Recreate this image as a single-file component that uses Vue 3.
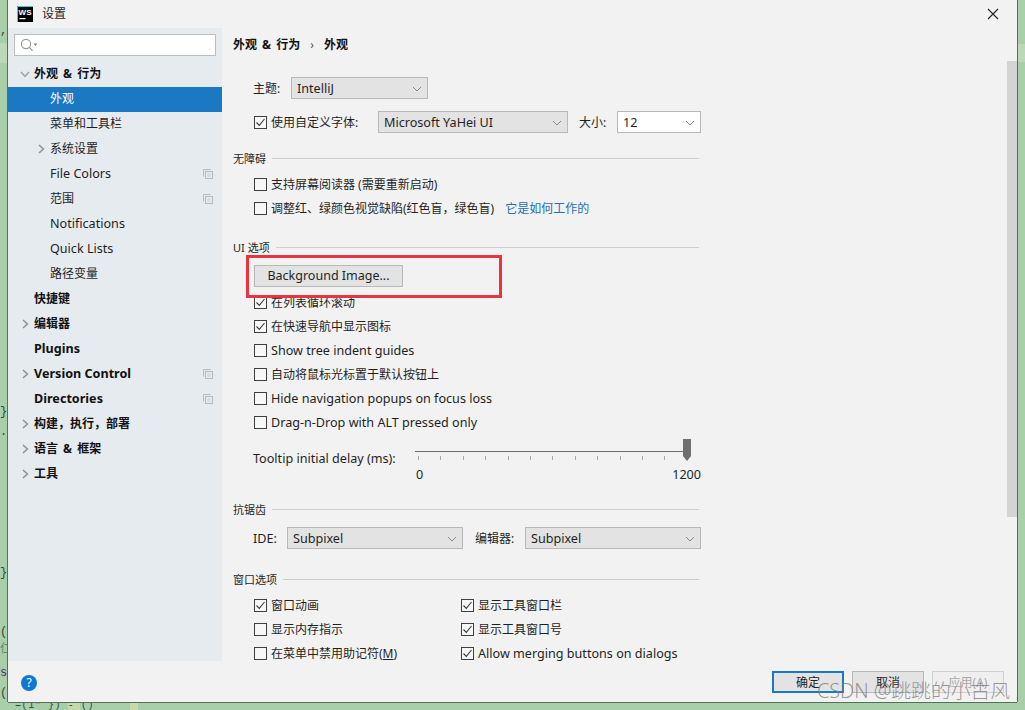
<script setup>
const isZh = (s) => /[\u4e00-\u9fff]/.test(s)
const tree = [
  { t: '外观 & 行为', bold: true, arrow: 'down', lv: 0 },
  { t: '外观', lv: 1, active: true },
  { t: '菜单和工具栏', lv: 1 },
  { t: '系统设置', lv: 1, arrow: 'right' },
  { t: 'File Colors', lv: 1, copy: true },
  { t: '范围', lv: 1, copy: true },
  { t: 'Notifications', lv: 1 },
  { t: 'Quick Lists', lv: 1 },
  { t: '路径变量', lv: 1 },
  { t: '快捷键', bold: true, lv: 0 },
  { t: '编辑器', bold: true, lv: 0, arrow: 'right' },
  { t: 'Plugins', bold: true, lv: 0 },
  { t: 'Version Control', bold: true, lv: 0, arrow: 'right', copy: true },
  { t: 'Directories', bold: true, lv: 0, copy: true },
  { t: '构建，执行，部署', bold: true, lv: 0, arrow: 'right' },
  { t: '语言 & 框架', bold: true, lv: 0, arrow: 'right' },
  { t: '工具', bold: true, lv: 0, arrow: 'right' },
]
const ui = [
  { t: '在列表循环滚动', c: true },
  { t: '在快速导航中显示图标', c: true },
  { t: 'Show tree indent guides', c: false },
  { t: '自动将鼠标光标置于默认按钮上', c: false },
  { t: 'Hide navigation popups on focus loss', c: false },
  { t: 'Drag-n-Drop with ALT pressed only', c: false },
]
const winLeft = [
  { t: '窗口动画', c: true },
  { t: '显示内存指示', c: false },
]
const winRight = [
  { t: '显示工具窗口栏', c: true },
  { t: '显示工具窗口号', c: true },
  { t: 'Allow merging buttons on dialogs', c: true },
]
const ticks = Array.from({ length: 13 }, (_, i) => i)
const frags = [
  { t: ',', top: 24, c: '#2d4a35' },
  { t: '}', top: 405, c: '#2d4a35' },
  { t: '.', top: 425, c: '#2d4a35' },
  { t: '}', top: 566, c: '#2d4a35' },
  { t: '(', top: 625, c: '#2d4a35' },
  { t: '仁', top: 643, c: '#5a8a72' },
  { t: 'so', top: 666, c: '#4b2a78' },
  { t: '(', top: 686, c: '#2d4a35' },
]
</script>

<template>
  <div class="desk">
    <span v-for="f in frags" :key="f.top" class="frag" :style="{ top: f.top + 'px', color: f.c }">{{ f.t }}</span>
    <span class="stripfrag">=(1"     }) -   ()</span>

    <div class="dialog">
      <header class="titlebar">
        <svg class="logo" width="16" height="16" viewBox="0 0 16 16">
          <rect width="16" height="16" fill="#000" />
          <path d="M0.5 16 V0.5 H16" fill="none" stroke="#21d7e8" />
          <rect x="2.5" y="12" width="6" height="1.2" fill="#fff" />
          <text x="1.6" y="9" class="logotext">WS</text>
        </svg>
        <span class="title">设置</span>
        <svg class="close" width="12" height="12" viewBox="0 0 12 12">
          <path d="M1 1 L11 11 M11 1 L1 11" stroke="#222" stroke-width="1.1" fill="none" />
        </svg>
      </header>

      <div class="body">
        <aside class="side">
          <div class="search">
            <svg width="18" height="14" viewBox="0 0 18 14">
              <circle cx="6" cy="6" r="4.6" fill="none" stroke="#9a9a9a" stroke-width="1.1" />
              <path d="M9.4 9.4 L12.5 12.6" stroke="#9a9a9a" stroke-width="1.3" />
              <path d="M13.5 5.5 h4 l-2 2.4z" fill="#8a8a8a" />
            </svg>
          </div>
          <div class="tree">
            <div
              v-for="n in tree"
              :key="n.t"
              class="node"
              :class="{ active: n.active, bold: n.bold, l1: n.lv === 1, zh: isZh(n.t) }"
            >
              <svg v-if="n.arrow === 'down'" class="arrow" width="10" height="10" viewBox="0 0 10 10">
                <path d="M1 3 L5 7.4 L9 3" fill="none" stroke="#a3a7ab" stroke-width="1.6" />
              </svg>
              <svg v-if="n.arrow === 'right'" class="arrow" width="10" height="10" viewBox="0 0 10 10">
                <path d="M3 1 L7.4 5 L3 9" fill="none" stroke="#8f9396" stroke-width="1.6" />
              </svg>
              <span>{{ n.t }}</span>
              <svg v-if="n.copy" class="copy" width="10" height="10" viewBox="0 0 10 10">
                <path d="M0.5 7.5 V0.5 H7.5" fill="none" stroke="#b6babd" />
                <rect x="2.5" y="2.5" width="7" height="7" fill="none" stroke="#b6babd" />
                <path d="M4 5 H8 M4 7 H8" stroke="#ccd0d3" />
              </svg>
            </div>
          </div>
        </aside>

        <main class="content">
          <div class="crumb"><b>外观 &amp; 行为</b><i>›</i><b>外观</b></div>

          <div class="row theme">
            <label class="lab">主题:</label>
            <div class="field gray w137">IntelliJ<svg class="chev" width="10" height="6" viewBox="0 0 10 6"><path d="M1 1 L5 5 L9 1" fill="none" stroke="#8a8a8a" /></svg></div>
          </div>

          <div class="row font">
            <span class="box"><svg width="13" height="13" viewBox="0 0 13 13"><path d="M2.5 6.5 L5.3 9.4 L10.5 3" fill="none" stroke="#3c3c3c" stroke-width="1.1" /></svg></span>
            <span class="cklab zh fontlab">使用自定义字体:</span>
            <div class="field gray w190">Microsoft YaHei UI<svg class="chev" width="10" height="6" viewBox="0 0 10 6"><path d="M1 1 L5 5 L9 1" fill="none" stroke="#8a8a8a" /></svg></div>
            <span class="sizelab">大小:</span>
            <div class="field white w84">12<svg class="chev" width="10" height="6" viewBox="0 0 10 6"><path d="M1 1 L5 5 L9 1" fill="none" stroke="#8a8a8a" /></svg></div>
          </div>

          <div class="group g-a11y"><span>无障碍</span><hr /></div>
          <div class="ck"><span class="box"></span><span class="cklab zh">支持屏幕阅读器 (需要重新启动)</span></div>
          <div class="ck">
            <span class="box"></span><span class="cklab zh">调整红、绿颜色视觉缺陷(红色盲，绿色盲)</span>
            <a class="link">它是如何工作的</a>
          </div>

          <div class="group g-ui"><span>UI 选项</span><hr /></div>
          <div class="bgwrap">
            <button class="btn bg">Background Image...</button>
            <div class="redbox"></div>
          </div>
          <div v-for="o in ui" :key="o.t" class="ck">
            <span class="box"><svg v-if="o.c" width="13" height="13" viewBox="0 0 13 13"><path d="M2.5 6.5 L5.3 9.4 L10.5 3" fill="none" stroke="#3c3c3c" stroke-width="1.1" /></svg></span>
            <span class="cklab" :class="{ zh: isZh(o.t) }">{{ o.t }}</span>
          </div>

          <div class="tip">
            <span class="tiplab">Tooltip initial delay (ms):</span>
            <div class="slider">
              <div class="track"></div>
              <div class="ticks"><i v-for="k in ticks" :key="k"></i></div>
              <svg class="thumb" width="8" height="22" viewBox="0 0 8 22"><path d="M0 0 H8 V17 L4 22 L0 17 Z" fill="#6e6e6e" /></svg>
              <div class="scale"><span>0</span><span>1200</span></div>
            </div>
          </div>

          <div class="group g-aa"><span>抗锯齿</span><hr /></div>
          <div class="row aa">
            <label class="idelab">IDE:</label>
            <div class="field gray w176">Subpixel<svg class="chev" width="10" height="6" viewBox="0 0 10 6"><path d="M1 1 L5 5 L9 1" fill="none" stroke="#8a8a8a" /></svg></div>
            <label class="edlab">编辑器:</label>
            <div class="field gray w176">Subpixel<svg class="chev" width="10" height="6" viewBox="0 0 10 6"><path d="M1 1 L5 5 L9 1" fill="none" stroke="#8a8a8a" /></svg></div>
          </div>

          <div class="group g-win"><span>窗口选项</span><hr /></div>
          <div class="cols">
            <div class="col">
              <div v-for="o in winLeft" :key="o.t" class="ck">
                <span class="box"><svg v-if="o.c" width="13" height="13" viewBox="0 0 13 13"><path d="M2.5 6.5 L5.3 9.4 L10.5 3" fill="none" stroke="#3c3c3c" stroke-width="1.1" /></svg></span>
                <span class="cklab zh">{{ o.t }}</span>
              </div>
              <div class="ck"><span class="box"></span><span class="cklab zh">在菜单中禁用助记符(<u>M</u>)</span></div>
            </div>
            <div class="col">
              <div v-for="o in winRight" :key="o.t" class="ck">
                <span class="box"><svg v-if="o.c" width="13" height="13" viewBox="0 0 13 13"><path d="M2.5 6.5 L5.3 9.4 L10.5 3" fill="none" stroke="#3c3c3c" stroke-width="1.1" /></svg></span>
                <span class="cklab" :class="{ zh: isZh(o.t) }">{{ o.t }}</span>
              </div>
            </div>
          </div>
        </main>

        <div class="sbthumb"></div>
      </div>

      <footer class="foot">
        <div class="help">?</div>
        <div class="actions">
          <button class="btn ok">确定</button>
          <button class="btn">取消</button>
          <button class="btn dis">应用(A)</button>
        </div>
      </footer>
      <div class="wm">CSDN @跳跳的小古风</div>
    </div>
  </div>
</template>

<style>
html, body { margin: 0; padding: 0; overflow: hidden; }
</style>

<style scoped>
.desk {
  position: relative;
  width: 1025px;
  height: 710px;
  background:
    linear-gradient(#c5d9ad, #c5d9ad) 68px 703px / 12px 7px no-repeat,
    linear-gradient(#c5d9ad, #c5d9ad) 130px 703px / 8px 7px no-repeat,
    linear-gradient(#bcd8b8, #bcd8b8) 0 43px / 8px 20px no-repeat,
    linear-gradient(#bcd8b8, #bcd8b8) 1018px 44px / 7px 18px no-repeat,
    #a9cfaa;
  padding-left: 8px;
  box-sizing: border-box;
  overflow: hidden;
  font-family: "Noto Sans", "Noto Sans CJK SC", sans-serif;
  font-size: 12.6px;
  color: #1f1f1f;
}
.frag { position: absolute; left: 0; font-size: 12px; font-family: "Liberation Mono", "Noto Sans CJK SC", monospace; line-height: 14px; }
.stripfrag {
  position: absolute;
  left: 15px;
  top: 702px;
  font: 10px/8px "Liberation Mono", monospace;
  letter-spacing: 0.6px;
  color: #2d4a35;
  white-space: pre;
}
.dialog {
  position: relative;
  width: 1009px;
  height: 702px;
  background: #f2f2f2;
  box-shadow: -1px 0 0 #56705c, 1px 0 0 #56705c, 0 1px 0 #56705c;
  display: flex;
  flex-direction: column;
}
.titlebar { height: 28px; display: flex; align-items: center; padding-left: 9px; position: relative; flex: none; }
.logo { flex: none; }
.logotext { font: bold 8px "Liberation Sans", sans-serif; fill: #fff; }
.title { margin-left: 9px; font-size: 12px; line-height: 28px; }
.close { position: absolute; right: 18px; top: 8px; }
.body { display: flex; flex: none; height: 633px; position: relative; }
.side { width: 214px; background: #e6ebf0; flex: none; }
.search {
  margin: 6px 6px 0 6px;
  height: 20px;
  width: 195px;
  background: #fff;
  border: 1px solid #bdbdbd;
  display: flex;
  align-items: center;
  padding-left: 5px;
}
.tree { margin-top: 6px; }
.node { height: 25px; box-sizing: border-box; padding-bottom: 3px; position: relative; padding-left: 26px; display: flex; align-items: center; white-space: nowrap; color: #1f1f1f; }
.node.l1 { padding-left: 42px; }
.node.zh { font-size: 12px; word-spacing: 2px; }
.node.bold { font-weight: 700; color: #111; }
.node.active { background: #1b78c3; color: #fff; }
.arrow { position: absolute; left: 12px; top: 7px; }
.node.l1 .arrow { left: 28px; }
.copy { position: absolute; right: 9px; top: 7px; }
.content { flex: 1; padding: 0 0 0 11px; min-width: 0; }
.crumb { height: 32px; display: flex; align-items: center; font-size: 12px; word-spacing: 2px; }
.crumb b { font-weight: 700; color: #111; }
.crumb i { font-style: normal; margin: 0 10px; color: #555; }
.row { display: flex; align-items: center; height: 22px; }
.theme { margin-top: 17px; padding-left: 20px; }
.lab { width: 38px; font-size: 12px; }
.font { margin-top: 12px; padding-left: 21px; }
.fontlab { width: 107px; flex: none; }
.sizelab { margin-left: 11px; width: 38px; font-size: 12px; }
.field {
  height: 22px;
  box-sizing: border-box;
  border: 1px solid #b8b8b8;
  padding-left: 5px;
  display: flex;
  align-items: center;
  position: relative;
  flex: none;
}
.gray { background: #e3e3e3; }
.white { background: #fff; }
.w137 { width: 137px; }
.w190 { width: 190px; }
.w84 { width: 84px; }
.w176 { width: 176px; }
.chev { position: absolute; right: 5px; top: 8px; }
.group { display: flex; align-items: center; height: 16px; gap: 6px; width: 466px; font-size: 11px; }
.group hr { flex: 1; height: 1px; border: 0; background: #cfcfcf; margin: 0; }
.g-a11y { margin-top: 17px; }
.g-ui { margin-top: 19px; }
.g-aa { margin-top: 22px; }
.g-win { margin-top: 22px; }
.ck { height: 24px; display: flex; align-items: center; padding-left: 21px; white-space: nowrap; }
.g-a11y + .ck { margin-top: 6px; }
.box {
  width: 13px;
  height: 13px;
  box-sizing: border-box;
  border: 1px solid #3f3f3f;
  background: #f7f7f7;
  display: inline-flex;
  align-items: center;
  justify-content: center;
  flex: none;
}
.box svg { flex: none; }
.cklab { margin-left: 4px; }
.cklab.zh { font-size: 12px; }
.link { margin-left: 11px; color: #2470b3; font-size: 12px; }
.bgwrap { position: relative; margin-left: 21px; margin-top: 10px; height: 22px; margin-bottom: 3px; }
.btn {
  height: 22px;
  width: 72px;
  box-sizing: border-box;
  background: #e3e3e3;
  border: 1px solid #b8b8b8;
  font: inherit;
  font-size: 12px;
  color: #1f1f1f;
  padding: 0;
}
.bg { width: 149px; font-size: 12.5px; padding-bottom: 2px; }
.redbox {
  position: absolute;
  left: -8px;
  top: -10px;
  width: 256px;
  height: 43px;
  box-sizing: border-box;
  border: 3px solid #e9333f;
  z-index: 3;
}
.tip { display: flex; margin-top: 5px; padding-left: 20px; height: 40px; position: relative; }
.tiplab { width: 162px; line-height: 20px; white-space: nowrap; margin-top: 10px; }
.slider { position: relative; width: 286px; height: 48px; }
.track { position: absolute; left: 0; top: 12px; width: 272px; height: 1px; background: #6e6e6e; }
.ticks { position: absolute; left: 3px; top: 17px; width: 270px; display: flex; justify-content: space-between; }
.ticks i { width: 1px; height: 4px; background: #a8a8a8; }
.thumb { position: absolute; left: 268px; top: 0; }
.scale { position: absolute; left: 1px; top: 27px; width: 285px; display: flex; justify-content: space-between; }
.aa { margin-top: 10px; padding-left: 20px; }
.idelab { width: 34px; }
.edlab { margin-left: 12px; width: 50px; font-size: 12px; }
.cols { display: grid; grid-template-columns: 207px 1fr; margin-top: 6px; }
.sbthumb { position: absolute; right: 0; top: 33px; height: 456px; width: 10px; background: #d4d4d4; }
.foot { flex: 1; position: relative; display: flex; align-items: flex-start; }
.help {
  position: absolute;
  left: 13px;
  top: 14px;
  width: 16px;
  height: 16px;
  border-radius: 50%;
  background: #0f78d4;
  color: #fff;
  font-size: 12px;
  line-height: 16px;
  text-align: center;
}
.actions { position: absolute; left: 764px; top: 10px; display: flex; gap: 8px; }
.ok { border: 2px solid #1b78c3; }
.dis { color: #a8a8a8; background: #efefef; border-color: #d0d0d0; }
.wm {
  position: absolute;
  left: 809px;
  top: 680px;
  font-size: 19.8px;
  font-weight: 300;
  line-height: 22px;
  color: rgba(120, 120, 120, 0.75);
  white-space: nowrap;
  z-index: 4;
}
</style>
